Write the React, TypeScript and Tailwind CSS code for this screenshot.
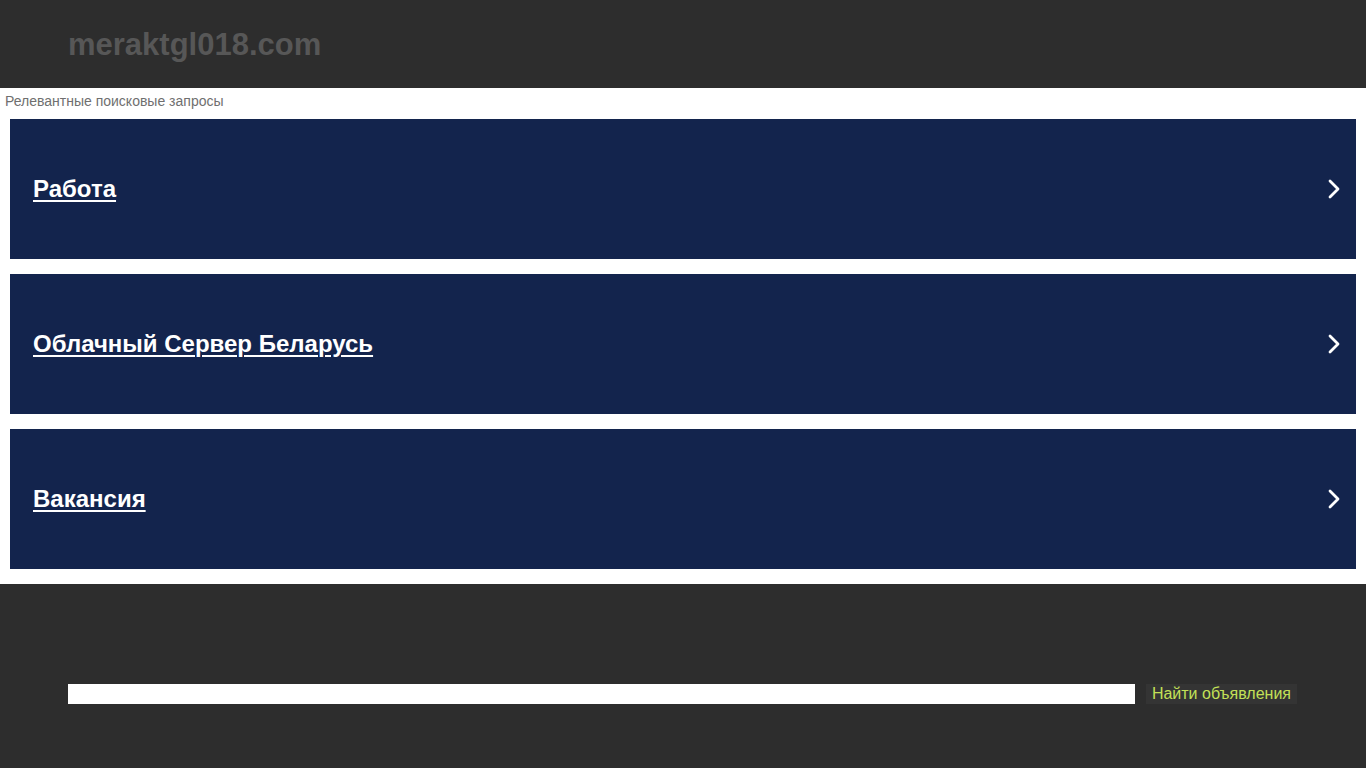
import React from 'react';

const links = ['Работа', 'Облачный Сервер Беларусь', 'Вакансия'];

function Chevron() {
  return (
    <svg width="14" height="20" viewBox="0 0 14 20" className="shrink-0">
      <path d="M3 2 L11 10 L3 18" fill="none" stroke="#ffffff" strokeWidth="2.8" strokeLinecap="round" strokeLinejoin="round" />
    </svg>
  );
}

export default function App() {
  return (
    <div className="min-h-[768px] flex flex-col bg-[#2d2d2d] font-['Liberation_Sans',Arial,sans-serif]">
      {/* header */}
      <header className="h-[88px] flex items-center pl-[68px] pt-[1px]">
        <h1 className="text-[31px] font-bold text-[#575757] leading-none">meraktgl018.com</h1>
      </header>

      {/* related searches */}
      <main className="bg-white pb-[15px]">
        <p className="text-[14px] text-[#6f6f6f] pl-[5px] pt-[5px] pb-[10px] leading-[16px]">Релевантные поисковые запросы</p>
        <div className="flex flex-col gap-[15px] px-[10px]">
          {links.map((label) => (
            <a
              key={label}
              href="#"
              className="h-[140px] bg-[#13244d] flex items-center justify-between pl-[23px] pr-[15px]"
            >
              <span className="text-[24px] font-bold text-white underline underline-offset-[3px] decoration-2">{label}</span>
              <Chevron />
            </a>
          ))}
        </div>
      </main>

      {/* search footer */}
      <footer className="flex-1 flex items-start pt-[100px] pl-[68px] pr-[69px]">
        <div className="flex items-center gap-[11px] w-full">
          <input className="h-[20px] flex-1 bg-white border-0 outline-none" />
          <button className="h-[20px] px-[6px] bg-[#343434] text-[#c3e057] text-[16px] leading-[20px]">Найти объявления</button>
        </div>
      </footer>
    </div>
  );
}
